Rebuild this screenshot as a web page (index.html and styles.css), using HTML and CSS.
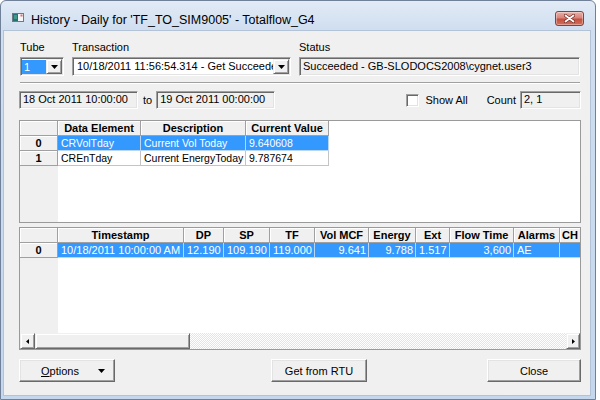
FILE: index.html
```html
<!DOCTYPE html>
<html>
<head>
<meta charset="utf-8">
<link rel="stylesheet" href="styles.css">
</head>
<body>
<div class="window">
  <div class="titlebar">
    <svg class="app-icon" width="12" height="9" viewBox="0 0 12 9">
      <rect x="0.5" y="0.5" width="11" height="8" fill="#f4f6f8" stroke="#6d7a86"/>
      <rect x="1" y="1" width="5" height="7" fill="#23727a"/>
      <rect x="2" y="2" width="3" height="4" fill="#3f9a8a"/>
      <rect x="8.5" y="1.5" width="2" height="2" fill="#e06a6a"/>
    </svg>
    <span class="title">History - Daily for 'TF_TO_SIM9005' - Totalflow_G4</span>
    <div class="close-btn">
      <svg width="11" height="9" viewBox="0 0 11 9">
        <path d="M1.5 1.5L9.5 7.5M9.5 1.5L1.5 7.5" stroke="#6e2a22" stroke-width="3.2" stroke-linecap="round"/>
        <path d="M1.5 1.5L9.5 7.5M9.5 1.5L1.5 7.5" stroke="#fff" stroke-width="1.8" stroke-linecap="round"/>
      </svg>
    </div>
  </div>
  <div class="client">
    <div class="fields">
      <span class="lbl">Tube</span>
      <span class="lbl">Transaction</span>
      <span class="lbl">Status</span>
      <div class="combo tube">
        <span class="combo-text"><span class="hilite">1</span></span>
        <span class="drop"><svg width="7" height="4" viewBox="0 0 7 4"><path d="M0 0h7L3.5 4z"/></svg></span>
      </div>
      <div class="combo">
        <span class="combo-text">10/18/2011 11:56:54.314 - Get Succeeded</span>
        <span class="drop"><svg width="7" height="4" viewBox="0 0 7 4"><path d="M0 0h7L3.5 4z"/></svg></span>
      </div>
      <div class="textbox">Succeeded - GB-SLODOCS2008\cygnet.user3</div>
    </div>
    <div class="separator"></div>
    <div class="range">
      <div class="textbox date">18 Oct 2011 10:00:00</div>
      <span class="to">to</span>
      <div class="textbox date">19 Oct 2011 00:00:00</div>
      <span class="spacer"></span>
      <span class="showall"><span class="check"></span>Show All</span>
      <span class="count-lbl">Count</span>
      <div class="textbox count">2, 1</div>
    </div>

    <div class="grid grid1">
      <div class="gbody">
        <table class="t1">
          <colgroup><col class="w38"><col class="w83"><col class="w105"><col class="w83"></colgroup>
          <tr><th></th><th>Data Element</th><th>Description</th><th>Current Value</th></tr>
          <tr class="selrow"><th class="rh">0</th><td>CRVolTday</td><td>Current Vol Today</td><td>9.640608</td></tr>
          <tr><th class="rh">1</th><td>CREnTday</td><td>Current EnergyToday</td><td>9.787674</td></tr>
        </table>
      </div>
    </div>

    <div class="grid grid2">
      <div class="gbody">
        <table class="t2">
          <colgroup><col class="w38"><col class="w126"><col class="w40"><col class="w46"><col class="w45"><col class="w54"><col class="w47"><col class="w34"><col class="w64"><col class="w46"><col class="w22"></colgroup>
          <tr><th></th><th>Timestamp</th><th>DP</th><th>SP</th><th>TF</th><th>Vol MCF</th><th>Energy</th><th>Ext</th><th>Flow Time</th><th>Alarms</th><th class="ch">CH</th></tr>
          <tr class="selrow"><th class="rh">0</th><td>10/18/2011 10:00:00 AM</td><td>12.190</td><td>109.190</td><td>119.000</td><td class="num">9.641</td><td class="num">9.788</td><td>1.517</td><td class="num">3,600</td><td>AE</td><td></td></tr>
        </table>
      </div>
      <div class="hscroll">
        <span class="sb-btn sb-arrow"><svg width="3" height="5" viewBox="0 0 3 5"><path d="M3 0v5L0 2.5z"/></svg></span>
        <span class="sb-btn sb-thumb"></span>
        <span class="sb-track"></span>
        <span class="sb-btn sb-arrow right"><svg width="3" height="5" viewBox="0 0 3 5"><path d="M0 0v5L3 2.5z"/></svg></span>
      </div>
    </div>

    <div class="buttons">
      <div class="btn btn-options"><span><u>O</u>ptions</span><svg class="caret" width="7" height="4" viewBox="0 0 7 4"><path d="M0 0h7L3.5 4z"/></svg></div>
      <div class="btn btn-rtu">Get from RTU</div>
      <div class="btn btn-close">Close</div>
    </div>
  </div>
</div>
</body>
</html>
```
FILE: styles.css
```css
* { box-sizing: border-box; }

body {
  margin: 0;
  background: #fff;
  font-family: "Liberation Sans", Arial, sans-serif;
  font-size: 11px;
  color: #000;
}

.window {
  width: 596px;
  height: 400px;
  border: 1px solid #6f8098;
  border-radius: 6px 6px 0 0;
  background: linear-gradient(#e2ebf6, #cfdef0 29px, #c5d7ed);
  display: flex;
  flex-direction: column;
  padding: 0 4px 3px 2px;
}

.titlebar {
  height: 29px;
  display: flex;
  align-items: center;
  padding: 6px 7px 0 9px;
}

.app-icon { margin-right: 7px; margin-bottom: 2px; flex: none; }

.title {
  font-size: 12.5px;
  line-height: 14px;
  margin-top: 3px;
  white-space: nowrap;
}

.close-btn {
  margin-left: auto;
  width: 29px;
  height: 15px;
  border: 1px solid #83423a;
  border-radius: 3px;
  background: linear-gradient(#eab0a8, #d8837a 45%, #c4503f 55%, #d26f5c);
  box-shadow: inset 0 0 0 1px rgba(255, 255, 255, 0.35);
  display: flex;
  align-items: center;
  justify-content: center;
}

.client {
  flex: 1;
  background: #f0f0f0;
  border: 1px solid #b3c3d7;
  padding: 10px 9px 0 15px;
  display: flex;
  flex-direction: column;
}

/* top fields */
.fields {
  display: grid;
  grid-template-columns: 44px 219px 1fr;
  column-gap: 8px;
  row-gap: 3px;
  padding: 0 1px;
}

.lbl { line-height: 13px; }

.combo {
  height: 19px;
  display: flex;
  background: #fff;
  border: 1px solid;
  border-color: #a0a0a0 #fff #fff #a0a0a0;
  box-shadow: inset 1px 1px #696969, inset -1px -1px #e3e3e3;
  padding: 1px;
}

.combo-text {
  flex: 1;
  line-height: 15px;
  padding-left: 3px;
  white-space: nowrap;
  overflow: hidden;
}

.tube .combo-text { padding: 1px 1px 0 0; }

.hilite {
  display: block;
  width: 24px;
  height: 14px;
  line-height: 14px;
  padding-left: 2px;
  background: #3399ff;
  color: #fff;
}

.drop {
  width: 16px;
  display: flex;
  align-items: center;
  justify-content: center;
  background: #f0f0f0;
  border: 1px solid;
  border-color: #f0f0f0 #696969 #696969 #f0f0f0;
  box-shadow: inset 1px 1px #fff, inset -1px -1px #a0a0a0;
}

.textbox {
  height: 19px;
  background: #f0f0f0;
  border: 1px solid;
  border-color: #a0a0a0 #fff #fff #a0a0a0;
  box-shadow: inset 1px 1px #696969, inset -1px -1px #e3e3e3;
  padding: 0 3px;
  line-height: 16px;
  white-space: nowrap;
  overflow: hidden;
}

.separator {
  height: 2px;
  margin: 6px 1px 0;
  border-top: 1px solid #a0a0a0;
  border-bottom: 1px solid #fff;
}

/* range row */
.range {
  display: flex;
  align-items: center;
  height: 18px;
  margin-top: 7px;
}

.range .textbox { height: 18px; line-height: 15px; }
.date { width: 119px; }
.to { margin: 0 4px 0 5px; }
.spacer { flex: 1; }

.showall {
  display: flex;
  align-items: center;
  gap: 6px;
  margin-right: 19px;
}

.check {
  width: 13px;
  height: 13px;
  background: #fff;
  border: 1px solid;
  border-color: #a0a0a0 #fff #fff #a0a0a0;
  box-shadow: inset 1px 1px #696969, inset -1px -1px #e3e3e3;
}

.count-lbl { margin-right: 4px; }
.count { width: 61px; }

/* grids */
.grid {
  border: 1px solid #9a9a9a;
  background: #fff;
  overflow: hidden;
}

.grid1 { margin-top: 11px; height: 103px; }

.grid2 {
  margin-top: 4px;
  height: 123px;
  display: flex;
  flex-direction: column;
}

.gbody {
  height: 100%;
  flex: 1;
  overflow: hidden;
  background: linear-gradient(to right, #f0f0f0 38px, #fff 38px);
}

table {
  border-collapse: separate;
  border-spacing: 0;
  table-layout: fixed;
}

.t1 { width: 309px; }
.t2 { width: 562px; }

.w22 { width: 22px; }
.w34 { width: 34px; }
.w38 { width: 38px; }
.w40 { width: 40px; }
.w45 { width: 45px; }
.w46 { width: 46px; }
.w47 { width: 47px; }
.w54 { width: 54px; }
.w64 { width: 64px; }
.w83 { width: 83px; }
.w105 { width: 105px; }
.w126 { width: 126px; }

td, th {
  height: 14px;
  line-height: 14px;
  padding: 0 3px;
  white-space: nowrap;
  overflow: hidden;
  font-size: 10.5px;
  font-weight: normal;
  text-align: left;
  border-right: 1px solid #c4c4c4;
  border-bottom: 1px solid #c4c4c4;
}

.t2 td { font-size: 11px; padding: 0 2px 0 3px; }

th {
  font-size: 11px;
  font-weight: bold;
  text-align: center;
  background: #f0f0f0;
  border-color: #a0a0a0;
  box-shadow: inset 1px 1px #fff;
}

th.ch { text-align: left; padding: 0 2px; }

tr.selrow td {
  background: #3399ff;
  color: #fff;
  border-color: #b9d7f5;
}

td.num { text-align: right; }

/* scrollbar */
.hscroll {
  display: flex;
  height: 16px;
  flex: none;
}

.sb-btn {
  background: #f0f0f0;
  border: 1px solid;
  border-color: #f0f0f0 #696969 #696969 #f0f0f0;
  box-shadow: inset 1px 1px #fff, inset -1px -1px #a0a0a0;
}

.sb-arrow {
  width: 15px;
  display: flex;
  align-items: center;
  justify-content: center;
}

.sb-arrow.right { width: 14px; }

.sb-thumb { width: 155px; }

.sb-track {
  flex: 1;
  background: repeating-conic-gradient(#fff 0 25%, #e4e4e4 0 50%) 0 0 / 2px 2px;
}

/* buttons */
.buttons {
  display: flex;
  margin-top: 9px;
}

.btn {
  height: 23px;
  width: 96px;
  display: flex;
  align-items: center;
  justify-content: center;
  background: #f0f0f0;
  border: 1px solid;
  border-color: #fff #696969 #696969 #fff;
  box-shadow: inset -1px -1px #a0a0a0, inset 1px 1px #e3e3e3;
}

.btn-options {
  justify-content: flex-start;
  padding: 0 9px 0 21px;
}

.btn-options .caret { margin-left: auto; }

.btn-rtu { margin-left: 156px; }

.btn-close {
  margin-left: auto;
  width: 94px;
}
```
